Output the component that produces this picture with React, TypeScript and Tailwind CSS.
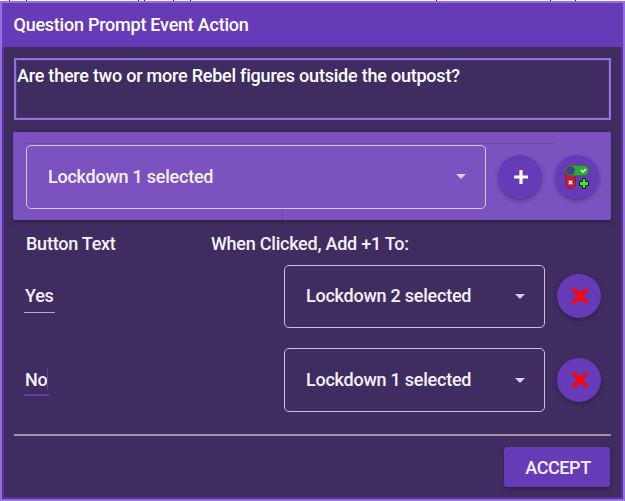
import React from "react";

function Caret() {
  return (
    <svg width="10" height="5" viewBox="0 0 10 5" className="shrink-0">
      <path d="M0 0H10L5 5Z" fill="#d8cfe8" />
    </svg>
  );
}

function Select({ label, className }: { label: string; className: string }) {
  return (
    <div className={`flex shrink-0 items-center justify-between rounded-[5px] border pl-[21px] ${className}`}>
      <span>{label}</span>
      <Caret />
    </div>
  );
}

function RoundButton({ children }: { children: React.ReactNode }) {
  return (
    <button className="flex size-[44px] shrink-0 items-center justify-center rounded-full bg-[#673ab7] shadow-[0_2px_4px_rgba(0,0,0,0.3)]">
      {children}
    </button>
  );
}

function ToggleIcon() {
  return (
    <svg width="26" height="26" viewBox="0 0 26 26">
      <path d="M1.500 6V19.500A5 5 0 0 0 11.500 19.500V6Z" fill="#bd1f32" stroke="#812347" />
      <path d="M4.800 16.800L8.200 20.200M8.200 16.800L4.800 20.200" stroke="#fff" strokeWidth="1.500" />
      <rect x="1.500" y="1.500" width="23" height="10" rx="5" fill="#31a83b" stroke="#287c3b" />
      <circle cx="6.500" cy="6.500" r="4" fill="#563494" stroke="#315d49" />
      <path d="M17 6L19 8L22 5" fill="none" stroke="#e5ffe0" strokeWidth="1.500" />
      <path d="M18.500 14.500H21.500V17.500H24.500V21.500H21.500V24.500H18.500V21.500H15.500V17.500H18.500Z" fill="#29ef2b" stroke="#092409" />
    </svg>
  );
}

function AnswerRow({ text, focused, label }: { text: string; focused?: boolean; label: string }) {
  return (
    <div className="flex h-[64px] items-center">
      <div className="flex w-[260px] shrink-0">
        <div className={focused ? "relative h-[32px] w-[25px] border-b-2 border-[#673ab7] pl-px pt-[4px]" : "h-[33px] w-[31px] border-b border-[#b5abc4] pl-px pt-[4px]"}>
          {text}
          {focused && <span className="absolute right-[1px] top-[5px] h-[21px] w-px bg-[#673ab7]" />}
        </div>
      </div>
      <Select label={label} className={`w-[261px] border-[#c9c0d8] pr-[19px] ${focused ? "h-[64px]" : "h-[63px]"}`} />
      <div className="ml-[12px]">
        <RoundButton>
          <svg width="18" height="18" viewBox="0 0 18 18" className="ml-px">
            <path d="M3.300 3.300L14.700 14.700M14.700 3.300L3.300 14.700" stroke="#ff0505" strokeWidth="4.200" strokeLinecap="round" />
          </svg>
        </RoundButton>
      </div>
    </div>
  );
}

export default function App() {
  return (
    <main className="h-[501px] w-[625px] overflow-hidden bg-[#f8f6fa] font-['Roboto',sans-serif] text-[18px] font-medium leading-[24px] tracking-[-0.24px] text-[#f5f1fb]">
      <div className="flex h-px">
        <i className="ml-[9px] h-px w-px bg-[#17123e]" />
        <i className="ml-[16px] h-px w-px bg-[#17123e]" />
        <i className="ml-[111px] h-px w-px bg-[#17123e]" />
        <i className="ml-[5px] h-px w-px bg-[#17123e]" />
        <i className="ml-[28px] h-px w-px bg-[#17123e]" />
        <i className="ml-[16px] h-px w-px bg-[#17123e]" />
        <i className="ml-[245px] h-px w-px bg-[#17123e]" />
        <i className="ml-[113px] h-px w-px bg-[#17123e]" />
        <i className="ml-[24px] h-px w-px bg-[#17123e]" />
      </div>
      <section className="h-[500px] border-2 border-[#9370db] bg-[#3f2d62]">
        <header className="h-[44px] bg-[#673ab7] pl-[11.500px] pt-[10px] text-white">Question Prompt Event Action</header>
        <div className="h-[452px] border-x-2 border-b-2 border-[#54349b] pl-[9px] pt-[11px]">
          <div className="ml-px h-[62px] w-[597px] border-2 border-[#9370db] pl-px pt-[4px] tracking-[-0.22px] text-white shadow-[inset_0_0_0_1px_#513585]">
            Are there two or more Rebel figures outside the outpost?
          </div>
          <div className="relative mt-[12px] flex h-[88px] w-[598px] items-center rounded-[2px] bg-[#7b52bf] pl-[13px] pt-px shadow-[0_2px_5px_rgba(0,0,0,0.3)]">
            <i className="absolute left-[12px] top-[11px] h-px w-[530px] bg-[#6f48ae]" />
            <i className="absolute left-[269px] top-[80px] h-[8px] w-px bg-[#6a43aa]" />
            <Select label="Lockdown 1 selected" className="h-[64px] w-[460px] border-[#d8c7f3] pr-[19px]" />
            <div className="ml-[12px] flex gap-[13px]">
              <RoundButton>
                <svg width="14" height="14" viewBox="0 0 14 14" className="ml-px">
                  <path d="M7 0V14M0 7H14" stroke="#fff" strokeWidth="3.200" />
                </svg>
              </RoundButton>
              <RoundButton><ToggleIcon /></RoundButton>
            </div>
          </div>
          <div className="flex pl-[13px] pt-[12px]">
            <span className="w-[185px]">Button Text</span>
            <span>When Clicked, Add +1 To:</span>
          </div>
          <div className="mt-[8px] flex flex-col gap-[20px] pl-[11px]">
            <AnswerRow text="Yes" label="Lockdown 2 selected" />
            <AnswerRow text="No" focused label="Lockdown 1 selected" />
          </div>
          <hr className="ml-px mt-[22px] w-[597px] border-0 border-t-2 border-[#9e95a7]" />
          <button className="ml-[491px] mt-[11px] h-[40px] w-[106px] rounded-[3px] bg-[#673ab7] pl-[2px] pt-px tracking-[-0.400px] shadow-[0_2px_4px_rgba(0,0,0,0.3)]">ACCEPT</button>
        </div>
      </section>
    </main>
  );
}
